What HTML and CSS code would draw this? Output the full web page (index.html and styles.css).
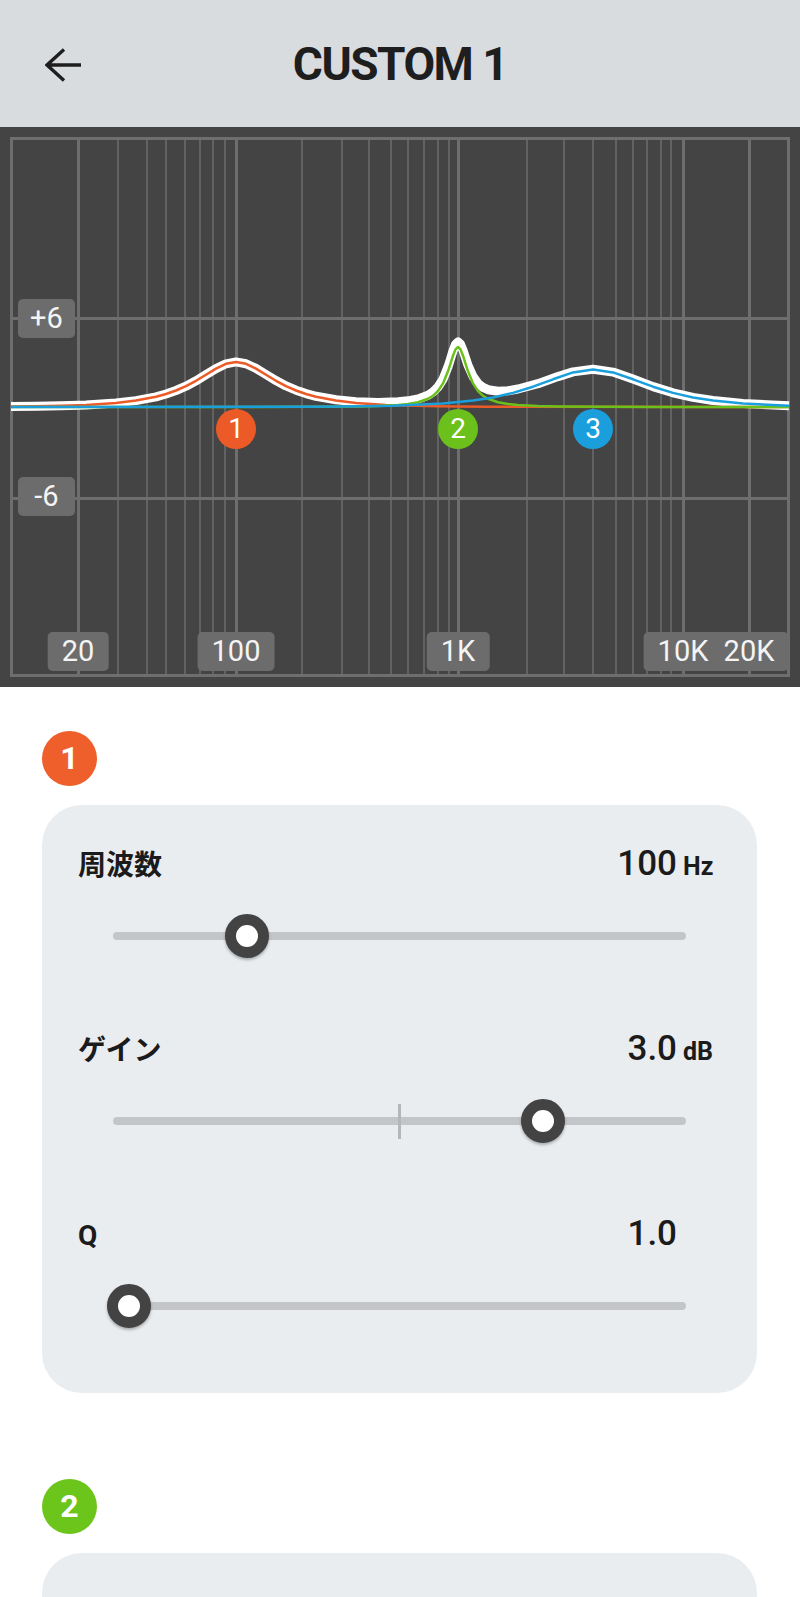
FILE: index.html
```html
<!DOCTYPE html>
<html lang="ja">
<head>
<meta charset="utf-8">
<title>CUSTOM 1</title>
<link rel="stylesheet" href="styles.css">
</head>
<body>
<div class="screen">
  <header class="appbar">
    <button class="back" aria-label="戻る">
      <svg width="36" height="34" viewBox="0 0 36 34"><path class="back-icon" d="M19 1.5 L2 17 L19 32.5 M2 17 H36"/></svg>
    </button>
    <h1 class="title">CUSTOM 1</h1>
    <span></span>
  </header>

  <section class="chart">
    <svg class="chart-svg" width="800" height="560" viewBox="0 127 800 560">
      <path class="grid-minor" d="M118 138V676M147 138V676M166 138V676M185 138V676M200 138V676M213 138V676M225 138V676M302 138V676M342 138V676M369 138V676M391 138V676M408 138V676M424 138V676M438 138V676M449 138V676M527 138V676M564 138V676M593 138V676M616 138V676M633 138V676M647 138V676M661 138V676M671 138V676"/>
      <path class="grid-major" d="M78.5 138V676M236.5 138V676M458.5 138V676M683.5 138V676M749.5 138V676M11 318.5H789M11 498.5H789"/>
      <rect class="grid-major" x="11.5" y="138.5" width="777" height="537"/>
      <polyline class="curve-sum" points="11,406.6 36,406.3 61,405.7 86,404.9 116,402.9 136,400.6 156,396.8 166,394 176,390.5 186,386.2 196,380.8 206,374.7 216,368.6 226,363.8 236,361.9 246,363.7 256,368.4 266,374.5 276,380.6 286,385.9 296,390.2 306,393.6 316,396.3 336,399.8 356,401.7 378,402.5 398,401.8 408,400.8 418,398.9 428,395.3 433,392 438,387 443,379.2 448,366.8 450.5,359 453,350.9 455.5,344.4 458,341.9 460.5,344.1 463,350.2 465.5,357.9 468,365.2 473,376.5 478,383.4 483,387.4 488,389.7 498,391.2 508,390.7 518,389 538,383.7 558,376.6 573,371.9 593,369.2 613,372.1 633,379.1 653,386.6 673,392.8 693,397.4 713,400.5 743,403.5 789,405.7"/>
      <polyline class="curve c1" points="11,406.6 36,406.3 61,405.7 86,404.9 116,402.9 136,400.6 156,396.8 166,394 176,390.5 186,386.2 196,380.8 206,374.7 216,368.6 226,363.8 236,362 246,363.8 256,368.6 266,374.7 276,380.8 286,386.2 296,390.5 306,394 316,396.8 336,400.6 356,402.9 386,404.9 436,406.3 486,406.7 789,407"/>
      <polyline class="curve c2" points="11,407 258,406.9 308,406.8 358,406.4 378,405.9 398,404.9 408,403.9 418,402.2 428,398.8 433,395.8 438,391 443,383.4 448,371.3 450.5,363.6 453,355.7 455.5,349.4 458,347 460.5,349.4 463,355.7 465.5,363.6 468,371.3 473,383.4 478,391 483,395.8 488,398.8 498,402.2 508,403.9 518,404.9 538,405.9 558,406.4 608,406.8 658,406.9 789,407"/>
      <polyline class="curve c3" points="11,407 293,406.8 343,406.6 393,405.8 443,403.5 473,400.6 493,397.5 513,392.9 533,386.7 553,379.3 573,372.4 593,369.5 613,372.4 633,379.3 653,386.7 673,392.9 693,397.5 713,400.6 743,403.5 789,405.7"/>
    </svg>

    <span class="ytag ytag-p6">+6</span>
    <span class="ytag ytag-m6">-6</span>

    <span class="xtag" style="left:78px">20</span>
    <span class="xtag" style="left:236px">100</span>
    <span class="xtag" style="left:458px">1K</span>
    <span class="xtag" style="left:683px">10K</span>
    <span class="xtag" style="left:749px">20K</span>

    <span class="dot dot-1" style="left:236px">1</span>
    <span class="dot dot-2" style="left:458px">2</span>
    <span class="dot dot-3" style="left:593px">3</span>
  </section>

  <main class="bands">
    <div class="band">
      <div class="badge badge-1">1</div>
      <div class="card">
        <div class="param">
          <div class="param-head">
            <span class="param-label">周波数</span>
            <span class="value">100</span>
            <span class="unit">Hz</span>
          </div>
          <div class="slider">
            <div class="track"></div>
            <span class="knob" style="left:23.4%"></span>
          </div>
        </div>
        <div class="param">
          <div class="param-head">
            <span class="param-label">ゲイン</span>
            <span class="value">3.0</span>
            <span class="unit">dB</span>
          </div>
          <div class="slider">
            <div class="track"></div>
            <span class="tick"></span>
            <span class="knob" style="left:75%"></span>
          </div>
        </div>
        <div class="param">
          <div class="param-head">
            <span class="param-label">Q</span>
            <span class="value">1.0</span>
            <span class="unit"></span>
          </div>
          <div class="slider">
            <div class="track"></div>
            <span class="knob" style="left:2.8%"></span>
          </div>
        </div>
      </div>
    </div>

    <div class="band">
      <div class="badge badge-2">2</div>
      <div class="card card-empty"></div>
    </div>
  </main>
</div>
</body>
</html>
```

FILE: styles.css
```css
* { box-sizing: border-box; margin: 0; padding: 0; }

html, body { background: #ffffff; }

body {
  font-family: Roboto, "Noto Sans CJK JP", sans-serif;
  color: #1b1b1b;
}

.screen {
  width: 800px;
  height: 100vh;
  overflow: hidden;
}

/* ---------- app bar ---------- */
.appbar {
  height: 127px;
  background: #d9dcdf;
  display: grid;
  grid-template-columns: 1fr auto 1fr;
  align-items: center;
}

.back {
  justify-self: start;
  margin-left: 45px;
  margin-top: 2px;
  width: 36px;
  height: 34px;
  border: 0;
  background: none;
  display: flex;
}

.back-icon {
  fill: none;
  stroke: #1e1e1e;
  stroke-width: 3.4;
  stroke-linejoin: miter;
}

.title {
  font: 700 46px/1 Roboto, sans-serif;
  letter-spacing: -1.5px;
  color: #1e1e1e;
}

/* ---------- chart ---------- */
.chart {
  position: relative;
  height: 560px;
  background: #444444;
}

.chart-svg { display: block; }

.grid-minor {
  fill: none;
  stroke: #626262;
  stroke-width: 2;
}

.grid-major {
  fill: none;
  stroke: #6e6e6e;
  stroke-width: 3;
}

.curve-sum {
  fill: none;
  stroke: #ffffff;
  stroke-width: 9;
  stroke-linejoin: round;
  stroke-linecap: butt;
}

.curve {
  fill: none;
  stroke-width: 2.5;
  stroke-linejoin: round;
}

.c1 { stroke: #ec5b27; }
.c2 { stroke: #6cc01b; }
.c3 { stroke: #1b9fdc; }

.ytag, .xtag {
  position: absolute;
  height: 39px;
  border-radius: 5px;
  background: #6c6c6c;
  color: #f4f4f4;
  font: 400 29px/39px Roboto, sans-serif;
  text-align: center;
}

.ytag { left: 18px; width: 57px; }
.ytag-p6 { top: 172px; }
.ytag-m6 { top: 350px; }

.xtag {
  top: 505px;
  padding: 0 14px;
  transform: translateX(-50%);
}

.dot {
  position: absolute;
  top: 282px;
  width: 40px;
  height: 40px;
  margin-left: -20px;
  border-radius: 50%;
  color: #ffffff;
  font: 400 28px/40px Roboto, sans-serif;
  text-align: center;
}

.dot-1 { background: #ec5b27; }
.dot-2 { background: #6cc01b; }
.dot-3 { background: #1b9fdc; }

/* ---------- bands ---------- */
.bands {
  padding: 44px 43px 0 42px;
}

.band + .band { margin-top: 86px; }

.badge {
  width: 55px;
  height: 55px;
  border-radius: 50%;
  color: #ffffff;
  font: 700 32px/55px Roboto, sans-serif;
  text-align: center;
}

.badge-1 { background: #ef5f2c; }
.badge-2 { background: #6cc51a; }

.card {
  margin-top: 19px;
  background: #eaedf0;
  border-radius: 40px;
  padding: 39px 43px 65px 36px;
}

.card-empty { height: 588px; }

.param + .param { margin-top: 71px; }

.param-head {
  display: flex;
  align-items: baseline;
  height: 40px;
}

.param-label {
  flex: 1;
  font: 700 28px/40px Roboto, "Noto Sans CJK JP", sans-serif;
  color: #1b1b1b;
}

.value {
  font: 500 35px/40px Roboto, sans-serif;
  color: #1b1b1b;
}

.unit {
  width: 31px;
  margin-left: 6px;
  font: 700 25px/40px Roboto, sans-serif;
  color: #1b1b1b;
}

.slider {
  position: relative;
  height: 44px;
  margin: 30px 28px 0 35px;
  display: flex;
  align-items: center;
}

.track {
  flex: 1;
  height: 8px;
  border-radius: 4px;
  background: #c4c5c9;
}

.tick {
  position: absolute;
  left: 50%;
  top: 50%;
  width: 3px;
  height: 35px;
  margin: -17.5px 0 0 -1.5px;
  background: #b5b6ba;
}

.knob {
  position: absolute;
  top: 50%;
  width: 44px;
  height: 44px;
  margin: -22px 0 0 -22px;
  border-radius: 50%;
  background: #ffffff;
  border: 11px solid #434343;
  box-shadow: 0 2px 3px rgba(0, 0, 0, 0.28);
}
```
